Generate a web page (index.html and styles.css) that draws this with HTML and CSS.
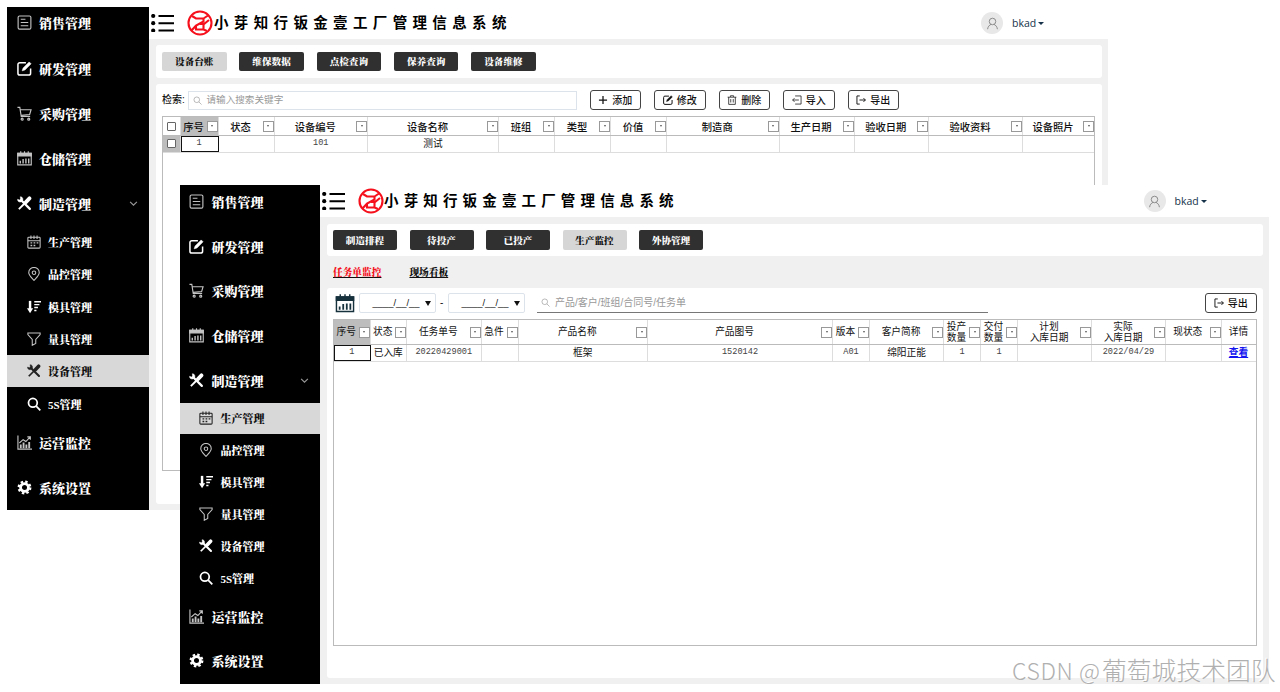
FILE: index.html
```html
<!DOCTYPE html>
<html lang="zh-CN">
<head>
	<meta charset="UTF-8">
	<meta name="viewport" content="width=device-width, initial-scale=1.0">
	<title>小芽知行钣金壹工厂管理信息系统</title>
	<link rel="stylesheet" href="styles.css">
</head>
<body>

	<svg class="sprite">
		<symbol id="doc" viewBox="0 0 16 16"><rect x="1.2" y="1" width="13.6" height="14" rx="1.5"/><path d="M4 4.5h5M4 8h8M4 11.5h8"/></symbol>
		<symbol id="edit" viewBox="0 0 16 16"><path d="M9.5 1.8H3a2 2 0 0 0-2 2V13a2 2 0 0 0 2 2h9.5a2 2 0 0 0 2-2V8" stroke-width="1.6"/><path d="M5.5 10.5l1-3L13 1l2 2-6.5 6.5z" fill="currentColor" stroke-width=".6"/></symbol>
		<symbol id="cart" viewBox="0 0 16 16"><path d="M.5 1.5h2.5L4.5 11h9.5M3.5 4h11.5l-1.5 5-9 .8"/><circle cx="5.5" cy="14" r="1.1"/><circle cx="12.5" cy="14" r="1.1"/></symbol>
		<symbol id="store" viewBox="0 0 16 16"><path d="M.8 2.5h14.4v12.3H.8z"/><path d="M.8 2.5h14.4v2.8H.8z" fill="currentColor"/><path d="M4 .3v2M8 .3v2M12 .3v2"/><path d="M3.5 10.5v2.8M6.5 8.5v4.8M9.5 8v5.3M12.5 8v5.3" stroke-width="1.5"/></symbol>
		<symbol id="tools" viewBox="0 0 16 16"><path d="M4.5 4.5l9.2 9.2" stroke-width="2.4" stroke-linecap="round"/><path d="M3.5.8l.3 2.5L2.8 4.3.6 3.5C.4 5.5 2 7 4.5 6.3L6.2 4.5C6.7 2.5 5.6.8 3.5.8z" fill="currentColor" stroke-width=".5"/><path d="M2 14l6-6" stroke-width="2"/><path d="M9.5 6.5l3.8-4" stroke-width="4" stroke-linecap="round"/></symbol>
		<symbol id="calendar" viewBox="0 0 16 16"><rect x="1" y="2.5" width="14" height="12.5" rx="1"/><path d="M1 6.5h14M4.5.5v4M8 .5v4M11.5.5v4"/><path d="M4 9h2M7.5 9h2M11 9h2M4 12h2M7.5 12h2" stroke-width="1.6"/></symbol>
		<symbol id="pin" viewBox="0 0 16 16"><path d="M8 15.3C5 12 2 9.3 2 6.5a6 6 0 0 1 12 0c0 2.8-3 5.5-6 8.8z"/><circle cx="8" cy="6.5" r="2"/></symbol>
		<symbol id="sort" viewBox="0 0 16 16"><path d="M3.5 1v10" stroke-width="2.8"/><path d="M0 9.5h7L3.5 15z" fill="currentColor" stroke="none"/><path d="M8.3 2h7.7M8.3 5.3h5.9M8.3 8.6h4.2M8.3 12h2.5" stroke-width="1.5"/></symbol>
		<symbol id="funnel" viewBox="0 0 16 16"><path d="M1 1.2h14v1.8L10 8.5v4.7l-4 2V8.5L1 3z"/></symbol>
		<symbol id="search" viewBox="0 0 16 16"><circle cx="6.7" cy="6.7" r="5"/><path d="M10.5 10.5l4.7 4.7"/></symbol>
		<symbol id="chart" viewBox="0 0 16 16"><path d="M1 .5v14.5h15"/><path d="M4 14v-4M7 14V8M10 14v-4M13 14V7.5" stroke-width="2"/><path d="M2.5 8.5L6.5 5l3 2 4.5-5M11 2h3.2v3"/></symbol>
		<symbol id="gear" viewBox="0 0 16 16"><circle cx="8" cy="8" r="4.2" stroke-width="3"/><circle cx="8" cy="8" r="6.2" stroke-width="2.4" stroke-dasharray="2.6 2.27"/></symbol>
		<symbol id="menu" viewBox="0 0 23 18"><path d="M7.5 2h15.5M7.5 9.2h15.5M7.5 16.5h15.5" stroke-width="1.9"/><g fill="currentColor" stroke="none"><circle cx="2.2" cy="2" r="2.1"/><circle cx="2.2" cy="9.2" r="2.1"/><circle cx="2.2" cy="16.5" r="2.1"/></g></symbol>
		<symbol id="logo" viewBox="0 0 26 26"><g stroke-width="2.1"><circle cx="13" cy="13" r="11.5"/><path d="M5 6l4 2.5h7.5v3L9 15.5l-4.5 5M21 5.5l-4.500 3M9 15.5v4h7.500v-5.5H13M16.500 14.500L22 10M16.500 19.500l3.500 1.500"/></g></symbol>
		<symbol id="user" viewBox="0 0 16 16"><circle cx="8" cy="5.5" r="4"/><path d="M2 15c.3-3 2-5 4.3-6M14 15c-.3-3-2-5-4.3-6"/></symbol>
		<symbol id="plus" viewBox="0 0 16 16"><path d="M8 1.5v13M1.5 8h13" stroke-width="2"/></symbol>
		<symbol id="trash" viewBox="0 0 16 16"><path d="M1 3.5h14M5.5 3V1.2h5V3M2.7 3.5V15h10.6V3.5M6 6.5v5.5M10 6.5v5.5"/></symbol>
		<symbol id="import" viewBox="0 0 16 16"><path d="M5 1.5h9.5v13H5M11 8H1M4 5L1 8l3 3"/></symbol>
		<symbol id="export" viewBox="0 0 16 16"><path d="M6 1.5H1.5v13H6M5.5 8h9.5M12 5l3 3-3 3" stroke-width="1.5"/></symbol>
		<symbol id="down" viewBox="0 0 16 16"><path d="M2 5l6 6 6-6"/></symbol>
	</svg>

	<!-- 设备管理 -->
	<div class="window window-device">
		<nav class="sidebar">
			<a class="item"><svg><use href="#doc"/></svg>销售管理</a>
			<a class="item"><svg class="strong"><use href="#edit"/></svg>研发管理</a>
			<a class="item"><svg><use href="#cart"/></svg>采购管理</a>
			<a class="item"><svg><use href="#store"/></svg>仓储管理</a>
			<a class="item"><svg class="strong"><use href="#tools"/></svg>制造管理<svg class="arrow"><use href="#down"/></svg></a>
			<a class="item sub"><svg><use href="#calendar"/></svg>生产管理</a>
			<a class="item sub"><svg><use href="#pin"/></svg>品控管理</a>
			<a class="item sub"><svg class="strong"><use href="#sort"/></svg>模具管理</a>
			<a class="item sub"><svg><use href="#funnel"/></svg>量具管理</a>
			<a class="item sub active"><svg class="strong"><use href="#tools"/></svg>设备管理</a>
			<a class="item sub"><svg class="strong bold"><use href="#search"/></svg>5S管理</a>
			<a class="item"><svg><use href="#chart"/></svg>运营监控</a>
			<a class="item"><svg class="strong"><use href="#gear"/></svg>系统设置</a>
		</nav>
		<main class="main">
			<header class="header">
				<svg class="menu"><use href="#menu"/></svg>
				<svg class="logo"><use href="#logo"/></svg>
				<h1>小芽知行钣金壹工厂管理信息系统</h1>
				<div class="user"><span class="avatar"><svg><use href="#user"/></svg></span>bkad<i class="caret"></i></div>
			</header>
			<div class="content">
				<div class="card nav-card">
					<button class="nav-btn current">设备台账</button>
					<button class="nav-btn">维保数据</button>
					<button class="nav-btn">点检查询</button>
					<button class="nav-btn">保养查询</button>
					<button class="nav-btn">设备维修</button>
				</div>
				<div class="card body-card">
					<div class="toolbar">
						<label>检索:</label>
						<div class="search-box"><svg><use href="#search"/></svg>请输入搜索关键字</div>
						<button class="tool-btn"><svg class="bold"><use href="#plus"/></svg>添加</button>
						<button class="tool-btn"><svg><use href="#edit"/></svg>修改</button>
						<button class="tool-btn"><svg><use href="#trash"/></svg>删除</button>
						<button class="tool-btn"><svg><use href="#import"/></svg>导入</button>
						<button class="tool-btn"><svg><use href="#export"/></svg>导出</button>
					</div>
					<div class="sheet">
						<div class="row head">
							<div class="cell"><i class="check"></i></div>
							<div class="cell selected"><span>序号</span><i class="filter"></i></div>
							<div class="cell"><span>状态</span><i class="filter"></i></div>
							<div class="cell"><span>设备编号</span><i class="filter"></i></div>
							<div class="cell"><span>设备名称</span><i class="filter"></i></div>
							<div class="cell"><span>班组</span><i class="filter"></i></div>
							<div class="cell"><span>类型</span><i class="filter"></i></div>
							<div class="cell"><span>价值</span><i class="filter"></i></div>
							<div class="cell"><span>制造商</span><i class="filter"></i></div>
							<div class="cell"><span>生产日期</span><i class="filter"></i></div>
							<div class="cell"><span>验收日期</span><i class="filter"></i></div>
							<div class="cell"><span>验收资料</span><i class="filter"></i></div>
							<div class="cell"><span>设备照片</span><i class="filter"></i></div>
						</div>
						<div class="row">
							<div class="cell selected"><i class="check"></i></div>
							<div class="cell focus">1</div>
							<div class="cell"></div>
							<div class="cell">101</div>
							<div class="cell text">测试</div>
							<div class="cell"></div>
							<div class="cell"></div>
							<div class="cell"></div>
							<div class="cell"></div>
							<div class="cell"></div>
							<div class="cell"></div>
							<div class="cell"></div>
							<div class="cell"></div>
						</div>
					</div>
				</div>
			</div>
		</main>
	</div>

	<!-- 生产管理 -->
	<div class="window window-produce">
		<nav class="sidebar">
			<a class="item"><svg><use href="#doc"/></svg>销售管理</a>
			<a class="item"><svg class="strong"><use href="#edit"/></svg>研发管理</a>
			<a class="item"><svg><use href="#cart"/></svg>采购管理</a>
			<a class="item"><svg><use href="#store"/></svg>仓储管理</a>
			<a class="item"><svg class="strong"><use href="#tools"/></svg>制造管理<svg class="arrow"><use href="#down"/></svg></a>
			<a class="item sub active"><svg><use href="#calendar"/></svg>生产管理</a>
			<a class="item sub"><svg><use href="#pin"/></svg>品控管理</a>
			<a class="item sub"><svg class="strong"><use href="#sort"/></svg>模具管理</a>
			<a class="item sub"><svg><use href="#funnel"/></svg>量具管理</a>
			<a class="item sub"><svg class="strong"><use href="#tools"/></svg>设备管理</a>
			<a class="item sub"><svg class="strong bold"><use href="#search"/></svg>5S管理</a>
			<a class="item"><svg><use href="#chart"/></svg>运营监控</a>
			<a class="item"><svg class="strong"><use href="#gear"/></svg>系统设置</a>
		</nav>
		<main class="main">
			<header class="header">
				<svg class="menu"><use href="#menu"/></svg>
				<svg class="logo"><use href="#logo"/></svg>
				<h1>小芽知行钣金壹工厂管理信息系统</h1>
				<div class="user"><span class="avatar"><svg><use href="#user"/></svg></span>bkad<i class="caret"></i></div>
			</header>
			<div class="content">
				<div class="card nav-card">
					<button class="nav-btn">制造排程</button>
					<button class="nav-btn">待投产</button>
					<button class="nav-btn">已投产</button>
					<button class="nav-btn current">生产监控</button>
					<button class="nav-btn">外协管理</button>
				</div>
				<div class="tabs"><a class="on">任务单监控</a><a>现场看板</a></div>
				<div class="card body-card">
					<div class="toolbar">
						<svg class="date-icon"><use href="#store"/></svg>
						<div class="date"><span>____/__/__</span><i class="caret"></i></div>
						<span class="dash">-</span>
						<div class="date"><span>____/__/__</span><i class="caret"></i></div>
						<div class="search-line"><svg><use href="#search"/></svg>产品/客户/班组/合同号/任务单</div>
						<button class="tool-btn"><svg><use href="#export"/></svg>导出</button>
					</div>
					<div class="sheet">
						<div class="row head">
							<div class="cell selected"><span>序号</span><i class="filter"></i></div>
							<div class="cell"><span>状态</span><i class="filter"></i></div>
							<div class="cell"><span>任务单号</span><i class="filter"></i></div>
							<div class="cell"><span>急件</span><i class="filter"></i></div>
							<div class="cell"><span>产品名称</span><i class="filter"></i></div>
							<div class="cell"><span>产品图号</span><i class="filter"></i></div>
							<div class="cell"><span>版本</span><i class="filter"></i></div>
							<div class="cell"><span>客户简称</span><i class="filter"></i></div>
							<div class="cell"><span>投产<br>数量</span><i class="filter"></i></div>
							<div class="cell"><span>交付<br>数量</span><i class="filter"></i></div>
							<div class="cell"><span>计划<br>入库日期</span><i class="filter"></i></div>
							<div class="cell"><span>实际<br>入库日期</span><i class="filter"></i></div>
							<div class="cell"><span>现状态</span><i class="filter"></i></div>
							<div class="cell"><span>详情</span></div>
						</div>
						<div class="row">
							<div class="cell focus">1</div>
							<div class="cell text">已入库</div>
							<div class="cell">20220429001</div>
							<div class="cell"></div>
							<div class="cell text">框架</div>
							<div class="cell">1520142</div>
							<div class="cell">A01</div>
							<div class="cell text">绵阳正能</div>
							<div class="cell">1</div>
							<div class="cell">1</div>
							<div class="cell"></div>
							<div class="cell">2022/04/29</div>
							<div class="cell"></div>
							<div class="cell text"><a class="link">查看</a></div>
						</div>
					</div>
				</div>
			</div>
		</main>
	</div>

	<div class="watermark"><span>CSDN @</span>葡萄城技术团队</div>

</body>
</html>
```

FILE: styles.css
```css
* {
	box-sizing: border-box;
}
body {
	margin: 0;
	height: 692px;
	position: relative;
	overflow: hidden;
	background: #fff;
	color: #111;
	font-family: "Liberation Sans", "Noto Sans CJK SC", sans-serif;
}
svg {
	display: block;
	flex: none;
	fill: none;
	stroke: currentColor;
	stroke-width: 1.2;
}
.sprite {
	position: absolute;
	width: 0;
	height: 0;
}
button {
	font-family: inherit;
	padding: 0;
	margin: 0;
}

/* windows */
.window {
	position: absolute;
	display: flex;
	background: #fff;
}
.window-device {
	left: 7px;
	top: 7px;
	width: 1101px;
	height: 503px;
	--side: 142px;
	--item: 45.1px;
	--sub: 32.3px;
	--pad: 9.5px;
	--shift: -6.6px;
}
.window-produce {
	left: 180px;
	top: 185px;
	width: 1089px;
	height: 499px;
	--side: 140px;
	--item: 44.65px;
	--sub: 31.9px;
	--pad: 9px;
	--shift: -5.7px;
}

/* sidebar */
.sidebar {
	width: var(--side);
	flex: none;
	background: #000;
	overflow: hidden;
}
.item {
	display: flex;
	align-items: center;
	height: var(--item);
	padding-left: var(--pad);
	color: #fff;
	font: 900 13px "Liberation Serif", "Noto Serif CJK SC", "Noto Sans CJK SC", serif;
}
.item:first-child {
	margin-top: var(--shift);
}
.item svg {
	width: 15px;
	height: 15px;
	margin-right: 7.5px;
	color: #c4c4c4;
}
.item svg.strong {
	color: #fff;
}
.item svg.bold {
	stroke-width: 2;
}
.item svg.arrow {
	width: 9px;
	height: 9px;
	margin: 0 11.5px 0 auto;
	color: #999;
	stroke-width: 2;
}
.item.sub {
	height: var(--sub);
	padding-left: calc(var(--pad) + 10px);
	font-size: 11px;
}
.item.sub svg {
	width: 14px;
	height: 14px;
}
.item.active {
	background: #d8d8d8;
	color: #111;
}
.item.active svg {
	color: #222;
}

/* header */
.main {
	flex: 1;
	min-width: 0;
	display: flex;
	flex-direction: column;
}
.header {
	height: 32px;
	flex: none;
	display: flex;
	align-items: center;
	padding-left: 2px;
}
.menu {
	width: 23px;
	height: 18px;
	color: #000;
}
.logo {
	width: 26px;
	height: 26px;
	margin-left: 13px;
	color: #f5101c;
}
h1 {
	margin: -2px 0 0 1px;
	font: 700 14.5px/20px "Noto Sans CJK SC", sans-serif;
	letter-spacing: 5.35px;
	color: #000;
	white-space: nowrap;
}
.window-produce h1 {
	margin-left: 0;
	letter-spacing: 5.15px;
}
.user {
	display: flex;
	align-items: center;
	width: 127px;
	margin-left: auto;
	font: 500 10.5px "Open Sans", sans-serif;
	color: #16324a;
}
.window-produce .user {
	width: 125.5px;
}
.avatar {
	width: 22px;
	height: 22px;
	margin-right: 9px;
	border-radius: 50%;
	background: #e8e8e8;
	display: flex;
	align-items: center;
	justify-content: center;
	color: #888;
}
.avatar svg {
	width: 13px;
	height: 13px;
}
.caret {
	border: 3px solid transparent;
	border-top: 3.5px solid currentColor;
	border-bottom: 0;
	margin-left: 2px;
}

/* content */
.content {
	flex: 1;
	display: flex;
	flex-direction: column;
	padding: 6px 6.5px;
	background: #f0f0f0;
}
.card {
	background: #fff;
	border-radius: 3px;
}
.nav-card {
	height: 33px;
	flex: none;
	display: flex;
	align-items: center;
	gap: 12.8px;
	padding-left: 6.5px;
	margin-bottom: 6px;
}
.nav-btn {
	width: 64.5px;
	height: 19.5px;
	border: 0;
	border-radius: 2px;
	background: #303030;
	color: #fff;
	font: 900 9.6px/19px "Noto Serif CJK SC", "Noto Sans CJK SC", serif;
}
.nav-btn.current {
	background: #d6d6d6;
	color: #111;
}
.body-card {
	flex: 1;
	display: flex;
	flex-direction: column;
	padding: 6px 6.5px 33px;
}
.window-produce .content {
	padding-top: 7px;
}
.window-produce .nav-card {
	height: 32px;
	gap: 12.5px;
	margin: 0;
}
.window-produce .nav-btn {
	width: 64px;
}
.window-produce .body-card {
	padding: 5px 6px 32px 6.5px;
}
.tabs {
	height: 32px;
	flex: none;
	display: flex;
	align-items: center;
	gap: 28px;
	padding-left: 6.5px;
	font: 900 9.7px "Noto Serif CJK SC", "Noto Sans CJK SC", serif;
	text-decoration: underline;
}
.tabs .on {
	color: #f5101c;
}

/* toolbar */
.toolbar {
	height: 20px;
	flex: none;
	display: flex;
	align-items: center;
	margin-bottom: 6px;
	font: 10px/16px "Liberation Sans", "Noto Sans CJK SC", sans-serif;
}
.toolbar label {
	width: 25.5px;
	font-weight: 500;
	white-space: nowrap;
}
.search-box,
.search-line {
	display: flex;
	align-items: center;
	gap: 5px;
	height: 19px;
	padding-left: 4px;
	color: #999;
}
.search-box {
	width: 389px;
	border: 1px solid #dde3ea;
	font-size: 9.6px;
}
.search-box svg,
.search-line svg {
	width: 9px;
	height: 9px;
}
.search-line {
	width: 451px;
	height: 20px;
	margin-left: 12.5px;
	border-bottom: 1px solid #777;
}
.tool-btn {
	display: flex;
	align-items: center;
	justify-content: center;
	gap: 4px;
	width: 51.5px;
	height: 20px;
	margin-left: 13px;
	border: 1px solid #444;
	border-radius: 3px;
	background: #fff;
	color: #111;
	font: 500 10px/16px "Noto Sans CJK SC", sans-serif;
}
.tool-btn svg {
	width: 10px;
	height: 10px;
}
.window-produce .tool-btn {
	margin-left: auto;
}
.date-icon {
	width: 20px;
	height: 19px;
	margin: 0 4px 0 2px;
	color: #16303c;
}
.date {
	display: flex;
	align-items: center;
	justify-content: flex-end;
	width: 76.5px;
	height: 19.5px;
	padding-right: 4px;
	border: 1px solid #dde3ea;
	border-radius: 2px;
	font-size: 9.4px;
}
.date .caret {
	border-width: 5px 3px 0;
	margin-left: 5px;
}
.dash {
	width: 12.5px;
	text-align: center;
}

/* sheet */
.sheet {
	flex: 1;
	border: 1px solid #bbb;
}
.row {
	display: grid;
	height: 16.5px;
	border-bottom: 1px solid #ddd;
	font: 8.6px/1 "Liberation Mono", "Noto Sans CJK SC", monospace;
	color: #444;
}
.window-device .row {
	grid-template-columns: 17.5px 38px 56px 93.5px 131px 56px 56px 56px 112.5px 75px 74.5px 94px 1fr;
}
.window-produce .row {
	grid-template-columns: 36.5px 36.5px 74.5px 37px 129.5px 185px 37px 74px 37px 37px 74px 74px 55.5px 1fr;
}
.row.head {
	height: 19px;
	border-color: #bbb;
	font: 500 10.3px/11px "Noto Sans CJK SC", sans-serif;
	color: #111;
}
.window-produce .row.head {
	height: 25px;
	font: 400 9.7px/11.5px "Noto Sans CJK SC", sans-serif;
}
.cell {
	display: flex;
	align-items: center;
	justify-content: center;
	min-width: 0;
	border-right: 1px solid #ddd;
	white-space: nowrap;
	text-align: center;
}
.cell:last-child {
	border-right: 0;
}
.cell span {
	flex: 1;
}
.cell.text {
	font: 9.7px/12px "Noto Sans CJK SC", sans-serif;
	color: #111;
	padding-bottom: 1px;
}
.cell.selected {
	background: #bdbdbd;
}
.cell.focus {
	outline: 1.5px solid #111;
	outline-offset: -1px;
}
.filter {
	width: 11px;
	height: 11px;
	flex: none;
	border: 1px solid #999;
	background: #fff;
	display: flex;
	align-items: center;
	justify-content: center;
}
.filter::after {
	content: "";
	border: 1.5px solid transparent;
	border-top: 2px solid #555;
	border-bottom: 0;
}
.check {
	width: 9px;
	height: 9px;
	border: 1px solid #666;
	border-radius: 1px;
	background: #fff;
}
.link {
	color: #1414f0;
	text-decoration: underline;
	font-weight: 700;
}

.watermark {
	position: absolute;
	left: 1012px;
	top: 651px;
	font: 300 24.8px/36px "Noto Sans CJK SC", sans-serif;
	color: #b0b0b0;
	text-shadow: -1px -1px 0 #fff;
	white-space: nowrap;
}
.watermark span {
	display: inline-block;
	width: 90px;
	font-size: 23px;
	letter-spacing: .6px;
}
```
